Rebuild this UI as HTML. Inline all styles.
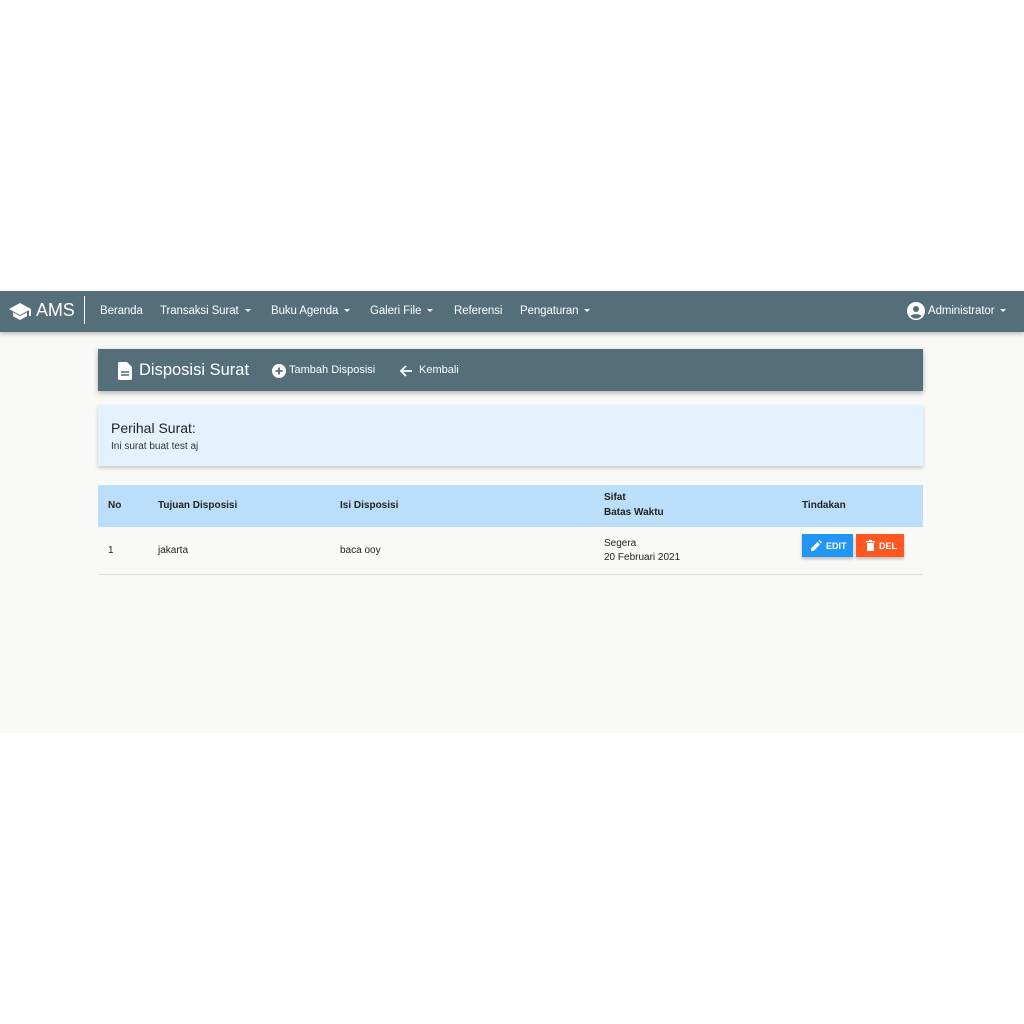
<!DOCTYPE html>
<html><head><meta charset="utf-8"><style>
*{margin:0;padding:0;box-sizing:border-box}
body{width:1024px;height:1024px;background:#fff;font-family:"Liberation Sans",sans-serif;position:relative;overflow:hidden}
.bg{position:absolute;left:0;top:332px;width:1024px;height:401px;background:#f9f9f6}
.nav{position:absolute;left:0;top:291px;width:1024px;height:41px;background:#546e7a;color:#fff;box-shadow:0 2px 4px rgba(0,0,0,.25)}
.nav span{position:absolute;top:14px;font-size:11.5px;letter-spacing:-0.1px}
.car{display:inline-block;border-left:3px solid transparent;border-right:3px solid transparent;border-top:3px solid #fff;vertical-align:middle;margin-left:6px}
.hdr{position:absolute;left:98px;top:349px;width:825px;height:42px;background:#546e7a;color:#fff;box-shadow:0 2px 5px rgba(0,0,0,.3)}
.box{position:absolute;left:98px;top:405px;width:825px;height:61px;background:#e3f2fd;box-shadow:0 2px 4px rgba(0,0,0,.2)}
.th{position:absolute;left:98px;top:485px;width:825px;height:42px;background:#bbdefb}
.t{position:absolute;font-size:10px;color:#222}
.b{font-weight:bold}
.line{position:absolute;left:98px;top:574px;width:825px;height:1px;background:#ddd}
.btn{position:absolute;top:534px;height:23px;color:#fff;font-size:9px;font-weight:bold;box-shadow:0 2px 3px rgba(0,0,0,.25);padding-top:7px}
</style></head><body>
<div class="bg"></div>
<div class="nav">
<svg style="position:absolute;left:8px;top:10px" width="24" height="20" viewBox="0 0 24 20"><path d="M12 2L1 8l11 6 9-4.9V15h2V8z" fill="#fff"/><path d="M5 11.2v4L12 19l7-3.8v-4L12 15z" fill="#fff"/></svg>
<span style="left:36px;top:9px;font-size:18px">AMS</span>
<div style="position:absolute;left:84px;top:5px;width:1px;height:28px;background:#fff"></div>
<span style="left:100px">Beranda</span>
<span style="left:160px">Transaksi Surat<i class="car"></i></span>
<span style="left:271px">Buku Agenda<i class="car"></i></span>
<span style="left:370px">Galeri File<i class="car"></i></span>
<span style="left:454px">Referensi</span>
<span style="left:520px">Pengaturan<i class="car"></i></span>
<svg style="position:absolute;left:907px;top:11px" width="18" height="18" viewBox="0 0 18 18"><circle cx="9" cy="9" r="9" fill="#fff"/><circle cx="9" cy="7" r="3" fill="#546e7a"/><path d="M3.5 14c1.5-2.5 9.5-2.5 11 0a7 7 0 0 1-11 0z" fill="#546e7a"/></svg>
<span style="left:928px">Administrator<i class="car"></i></span>
</div>
<div class="hdr">
<svg style="position:absolute;left:20px;top:13px" width="14" height="18" viewBox="0 0 14 18"><path d="M0 1.5A1.5 1.5 0 0 1 1.5 0H9l5 5v11.5A1.5 1.5 0 0 1 12.5 18h-11A1.5 1.5 0 0 1 0 16.5z" fill="#fff"/><path d="M3 10h8M3 13h8" stroke="#546e7a" stroke-width="1.5"/></svg>
<span style="position:absolute;left:41px;top:12px;font-size:16.5px">Disposisi Surat</span>
<svg style="position:absolute;left:174px;top:15px" width="14" height="14" viewBox="0 0 14 14"><circle cx="7" cy="7" r="7" fill="#fff"/><path d="M7 3.5v7M3.5 7h7" stroke="#546e7a" stroke-width="1.8"/></svg>
<span style="position:absolute;left:191px;top:15px;font-size:11px">Tambah Disposisi</span>
<svg style="position:absolute;left:301px;top:15px" width="14" height="14" viewBox="0 0 14 14"><path d="M13 7H2M7 2L2 7l5 5" stroke="#fff" stroke-width="1.8" fill="none"/></svg>
<span style="position:absolute;left:321px;top:15px;font-size:11px">Kembali</span>
</div>
<div class="box">
<div style="position:absolute;left:13px;top:15px;font-size:14px;color:#222">Perihal Surat:</div>
<div style="position:absolute;left:13px;top:36px;font-size:10px;color:#333">Ini surat buat test aj</div>
</div>
<div class="th"></div>
<div class="t b" style="left:108px;top:500px">No</div>
<div class="t b" style="left:158px;top:500px">Tujuan Disposisi</div>
<div class="t b" style="left:340px;top:500px">Isi Disposisi</div>
<div class="t b" style="left:604px;top:492px">Sifat</div>
<div class="t b" style="left:604px;top:507px">Batas Waktu</div>
<div class="t b" style="left:802px;top:500px">Tindakan</div>
<div class="t" style="left:108px;top:545px">1</div>
<div class="t" style="left:158px;top:545px">jakarta</div>
<div class="t" style="left:340px;top:545px">baca ooy</div>
<div class="t" style="left:604px;top:538px">Segera</div>
<div class="t" style="left:604px;top:552px">20 Februari 2021</div>
<div class="btn" style="left:802px;width:51px;background:#2196f3;padding-left:24px">EDIT
<svg style="position:absolute;left:9px;top:6px" width="11" height="11" viewBox="0 0 11 11"><path d="M0 8.5V11h2.5L9 4.5 6.5 2zM10 3.5l-2.5-2.5 1-1L11 2.5z" fill="#fff"/></svg></div>
<div class="btn" style="left:856px;width:48px;background:#ff5722;padding-left:23px">DEL
<svg style="position:absolute;left:10px;top:6px" width="9" height="11" viewBox="0 0 9 11"><path d="M0 1h9v1.3H0zM3 0h3v1H3zM1 3h7v8H1z" fill="#fff"/></svg></div>
<div class="line"></div>
</body></html>
